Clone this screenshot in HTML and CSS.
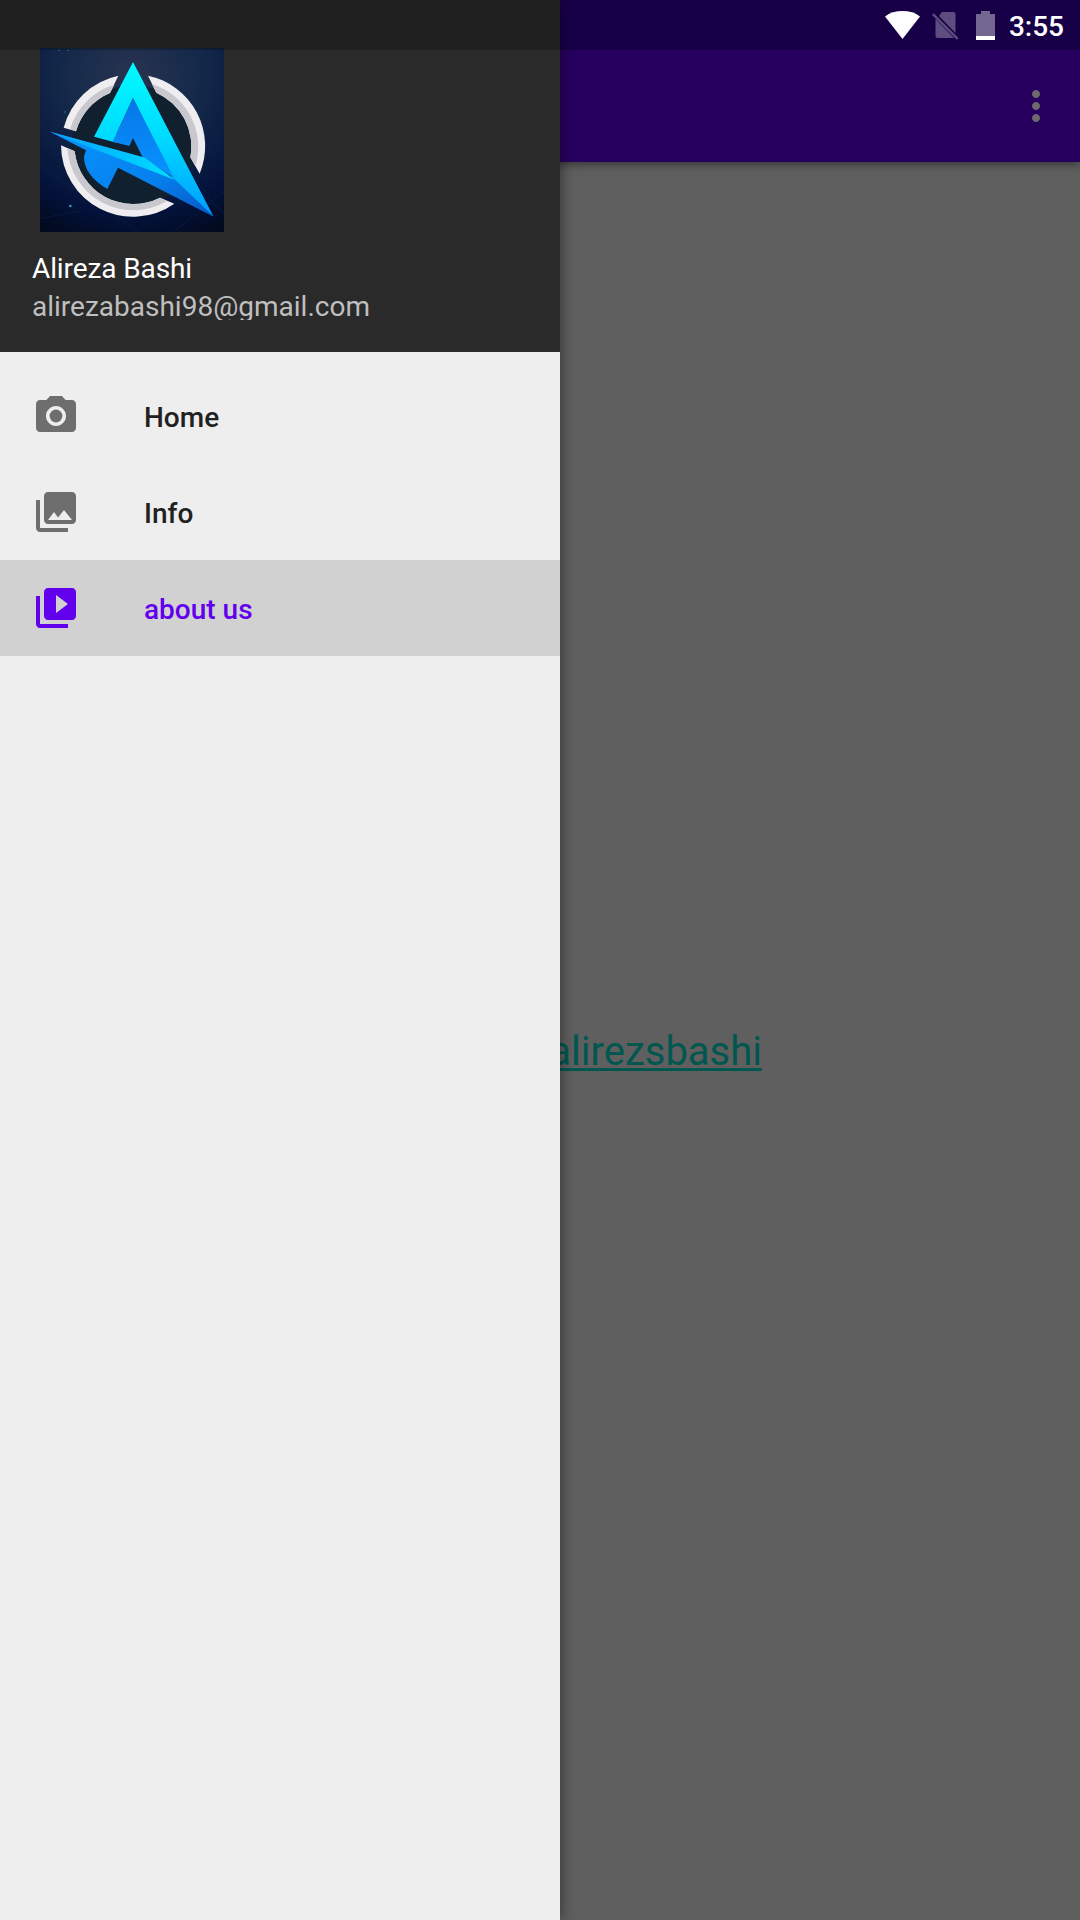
FILE: index.html
```html
<!DOCTYPE html>
<html lang="en">
<head>
<meta charset="utf-8">
<title>About us</title>
<link rel="stylesheet" href="styles.css">
</head>
<body>
<div class="screen">
  <div class="page">
    <header class="toolbar">
      <svg class="more" viewBox="0 0 24 24"><path d="M12 8c1.100 0 2-.9 2-2s-.9-2-2-2-2 .9-2 2 .9 2 2 2zm0 2c-1.100 0-2 .9-2 2s.9 2 2 2 2-.9 2-2-.9-2-2-2zm0 6c-1.100 0-2 .9-2 2s.9 2 2 2 2-.9 2-2-.9-2-2-2z"/></svg>
    </header>
    <main class="content"><a class="link">alirezsbashi</a></main>
  </div>

  <aside class="drawer">
    <div class="profile">
      <svg class="avatar" viewBox="30 24 552 552">
        <defs>
          <radialGradient id="bg" cx="50%" cy="15%" r="95%"><stop offset="0" stop-color="#283350"/><stop offset=".4" stop-color="#14294a"/><stop offset=".8" stop-color="#03123b"/><stop offset="1" stop-color="#020a1e"/></radialGradient>
          <linearGradient id="cyan" x1="0" y1="0" x2="0" y2="1"><stop offset="0" stop-color="#00fbff"/><stop offset=".5" stop-color="#00d9ff"/><stop offset="1" stop-color="#009cff"/></linearGradient>
          <linearGradient id="blue" x1="0" y1="0" x2="0" y2="1"><stop offset="0" stop-color="#0676e8"/><stop offset="1" stop-color="#0894ff"/></linearGradient>
          <linearGradient id="blade" x1="0" y1="0" x2="1" y2="0"><stop offset="0" stop-color="#0aa0f5"/><stop offset=".6" stop-color="#00c4ff"/><stop offset="1" stop-color="#00e1ff"/></linearGradient>
          <linearGradient id="tail" x1="0" y1="0" x2="1" y2="1"><stop offset="0" stop-color="#0795ff"/><stop offset=".6" stop-color="#0680ee"/><stop offset="1" stop-color="#0757c4"/></linearGradient>
        </defs>
        <path fill="url(#bg)" d="M30 24h552v552H30z"/>
        <g fill="none" stroke="#1d426a" stroke-opacity=".35" stroke-width="2"><path d="M30 380l115 75 100 65 80 56M30 535l120-22M150 24l45 75M430 576l152-120M530 24l-90 90M480 430l102 90"/></g>
        <g fill="#2c9eaa"><circle cx="121" cy="498" r="4"/><circle cx="87" cy="31" r="2"/><circle cx="115" cy="31" r="2"/><circle cx="105" cy="216" r="2"/></g>
        <circle cx="309" cy="319" r="184" fill="#10202f"/>
        <path fill="#efedef" d="M265 107A216 216 0 0 0 101 263L138 274A177 177 0 0 1 240 159zM354 107A216 216 0 0 1 509 401L481 352A177 177 0 0 0 379 158zM93 316A216 216 0 0 0 433 491L390 473A177 177 0 0 1 134 334z"/>
        <path fill="#c9c8ce" d="M253 134A198 198 0 0 0 120 268L138 274A177 177 0 0 1 240 159zM366 132A198 198 0 0 1 496 379L481 352A177 177 0 0 0 379 158zM112 324A198 198 0 0 0 411 483L390 473A177 177 0 0 1 134 334z"/>
        <path fill="url(#cyan)" d="M309 66L551 530 428 416 309 174 260 280 260 308 192 290z"/>
        <path fill="url(#blue)" d="M309 174L432 414 338 352 309 294 298 318 248 305z"/>
        <path fill="url(#tail)" d="M60 275L345 353 434 418 551 530 264 383 232 447Q162 405 162 350L168 331z"/>
        <path fill="url(#blade)" d="M60 275L345 353 434 419 166 317z"/>
      </svg>
      <div class="name">Alireza Bashi</div>
      <div class="email">alirezabashi98@gmail.com</div>
    </div>
    <nav class="menu">
      <a class="item">
        <svg class="icon" viewBox="0 0 24 24"><circle cx="12" cy="12" r="3.200"/><path d="M9 2L7.170 4H4c-1.100 0-2 .9-2 2v12c0 1.100.9 2 2 2h16c1.100 0 2-.9 2-2V6c0-1.100-.9-2-2-2h-3.170L15 2H9zm3 15c-2.760 0-5-2.240-5-5s2.240-5 5-5 5 2.240 5 5-2.240 5-5 5z"/></svg>
        <span class="label">Home</span>
      </a>
      <a class="item">
        <svg class="icon" viewBox="0 0 24 24"><path d="M22 16V4c0-1.100-.9-2-2-2H8c-1.100 0-2 .9-2 2v12c0 1.100.9 2 2 2h12c1.100 0 2-.9 2-2zm-11-4l2.030 2.710L16 11l4 5H8l3-4zM2 6v14c0 1.100.9 2 2 2h14v-2H4V6H2z"/></svg>
        <span class="label">Info</span>
      </a>
      <a class="item selected">
        <svg class="icon" viewBox="0 0 24 24"><path d="M4 6H2v14c0 1.100.9 2 2 2h14v-2H4V6zm16-4H8c-1.100 0-2 .9-2 2v12c0 1.100.9 2 2 2h12c1.100 0 2-.9 2-2V4c0-1.100-.9-2-2-2zm-8 12.500v-9l6 4.500-6 4.500z"/></svg>
        <span class="label">about us</span>
      </a>
    </nav>
  </aside>

  <div class="status">
    <svg class="wifi" viewBox="0 0 35 28"><path d="M0 5.500C9-1.800 26-1.800 35 5.500L17.500 28z"/></svg>
    <svg class="sim" viewBox="0 0 27 28"><path d="M10 0h11.500q2 0 2 2v19L7 4zM3.500 7L22 26H5.500q-2 0-2-2zM0 3l1.700-1.700L26.500 26l-1.700 1.700z"/></svg>
    <svg class="battery" viewBox="0 0 19 29"><path class="cell" d="M5 0h9v3h5v22H0V3h5z"/><path d="M0 25h19v4H0z"/></svg>
    <span class="clock">3:55</span>
  </div>
</div>
</body>
</html>
```
FILE: styles.css
```css
* { box-sizing: border-box; }
body { margin: 0; font-family: Roboto, "Liberation Sans", sans-serif; }
svg { display: block; flex: none; }

.screen { position: relative; width: 1080px; height: 1920px; overflow: hidden; background: #5f5f5f; }

.page { height: 100%; display: flex; flex-direction: column; }
.toolbar {
  height: 162px; padding: 50px 20px 0 0; flex: none;
  display: flex; align-items: center; justify-content: flex-end;
  background: #27005f; box-shadow: 0 3px 8px rgba(0, 0, 0, .4);
}
.more { width: 48px; height: 48px; fill: #6b6b6b; }
.content { flex: 1; display: flex; justify-content: flex-end; align-items: center; padding: 22px 318px 0 0; }
.link {
  font-size: 40px; line-height: 48px; color: #01574f;
  text-decoration: underline; text-decoration-thickness: 3px; text-underline-offset: 3px; text-decoration-skip-ink: none;
}

.drawer {
  position: absolute; left: 0; top: 0; width: 560px; height: 100%;
  background: #eee; box-shadow: 0 0 14px rgba(0, 0, 0, .5);
}
.profile { height: 352px; padding: 48px 32px 0; background: #2a2a2a; }
.avatar { width: 184px; height: 184px; margin-left: 8px; }
.name { margin-top: 17px; height: 38px; font-size: 28px; line-height: 40px; letter-spacing: -.1px; color: #fff; }
.email { height: 33px; overflow: hidden; font-size: 28px; line-height: 40px; color: #bfbfbf; }

.menu { padding-top: 16px; }
.item { height: 96px; padding-left: 32px; display: flex; align-items: center; gap: 64px; color: #212121; }
.icon { width: 48px; height: 48px; fill: #6e6e6e; }
.label { padding-top: 4px; font-size: 28px; line-height: 34px; font-weight: 500; }
.selected { background: #d1d1d1; color: #6200ee; }
.selected .icon { fill: #6200ee; }

.status {
  position: absolute; left: 0; top: 0; width: 100%; height: 50px; padding-right: 16px;
  display: flex; align-items: center; justify-content: flex-end;
  background: linear-gradient(90deg, rgba(0, 0, 0, .25) 560px, rgba(0, 0, 35, .4) 560px); color: #fff; fill: #fff;
}
.wifi { width: 35px; height: 28px; margin-right: 12px; }
.sim { width: 27px; height: 28px; margin: 2px 17px 0 0; opacity: .3; }
.battery { width: 19px; height: 29px; margin-right: 14px; }
.cell { opacity: .4; }
.clock { padding-top: 3px; font-size: 28px; line-height: 34px; font-weight: 500; }
```
